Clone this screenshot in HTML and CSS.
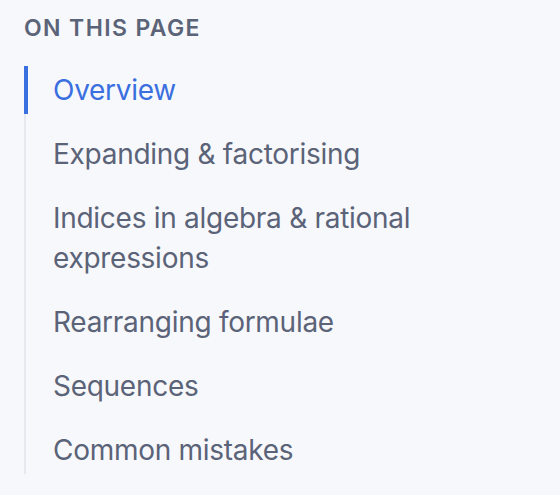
FILE: index.html
```html
<!DOCTYPE html>
<html lang="en">
<head>
<meta charset="utf-8">
<title>On this page</title>
<link rel="stylesheet" href="styles.css">
</head>
<body>
<nav class="toc">
  <h2 class="toc-title">ON THIS PAGE</h2>
  <ul class="toc-list">
    <li class="toc-item is-active"><a href="#overview">Overview</a></li>
    <li class="toc-item"><a href="#expanding">Expanding &amp; factorising</a></li>
    <li class="toc-item"><a href="#indices">Indices in algebra &amp; rational expressions</a></li>
    <li class="toc-item"><a href="#rearranging">Rearranging formulae</a></li>
    <li class="toc-item"><a href="#sequences">Sequences</a></li>
    <li class="toc-item"><a href="#mistakes">Common mistakes</a></li>
  </ul>
</nav>
</body>
</html>
```
FILE: styles.css
```css
html, body {
  margin: 0;
  padding: 0;
  background: #f7f8fb;
}

body {
  font-family: Inter, "Noto Sans", sans-serif;
  -webkit-font-smoothing: antialiased;
}

.toc {
  width: 420px;
  padding: 13px 0 0 24px;
}

.toc-title {
  margin: 0 0 23px 0;
  font-size: 23px;
  line-height: 30px;
  font-weight: 600;
  letter-spacing: 0.06em;
  color: #5b6378;
}

.toc-list {
  list-style: none;
  margin: 0;
  padding: 0;
  border-left: 2px solid #e6e8f0;
  display: flex;
  flex-direction: column;
  gap: 16px;
}

.toc-item {
  position: relative;
  padding: 4px 0 4px 27px;
  font-size: 28px;
  line-height: 40px;
  letter-spacing: -0.01em;
}

.toc-item a {
  color: #5b6378;
  text-decoration: none;
}

.toc-item.is-active::before {
  content: "";
  position: absolute;
  left: -2px;
  top: 0;
  bottom: 0;
  width: 4px;
  background: #3a6fe0;
}

.toc-item.is-active a {
  color: #3a6fe0;
}
```
